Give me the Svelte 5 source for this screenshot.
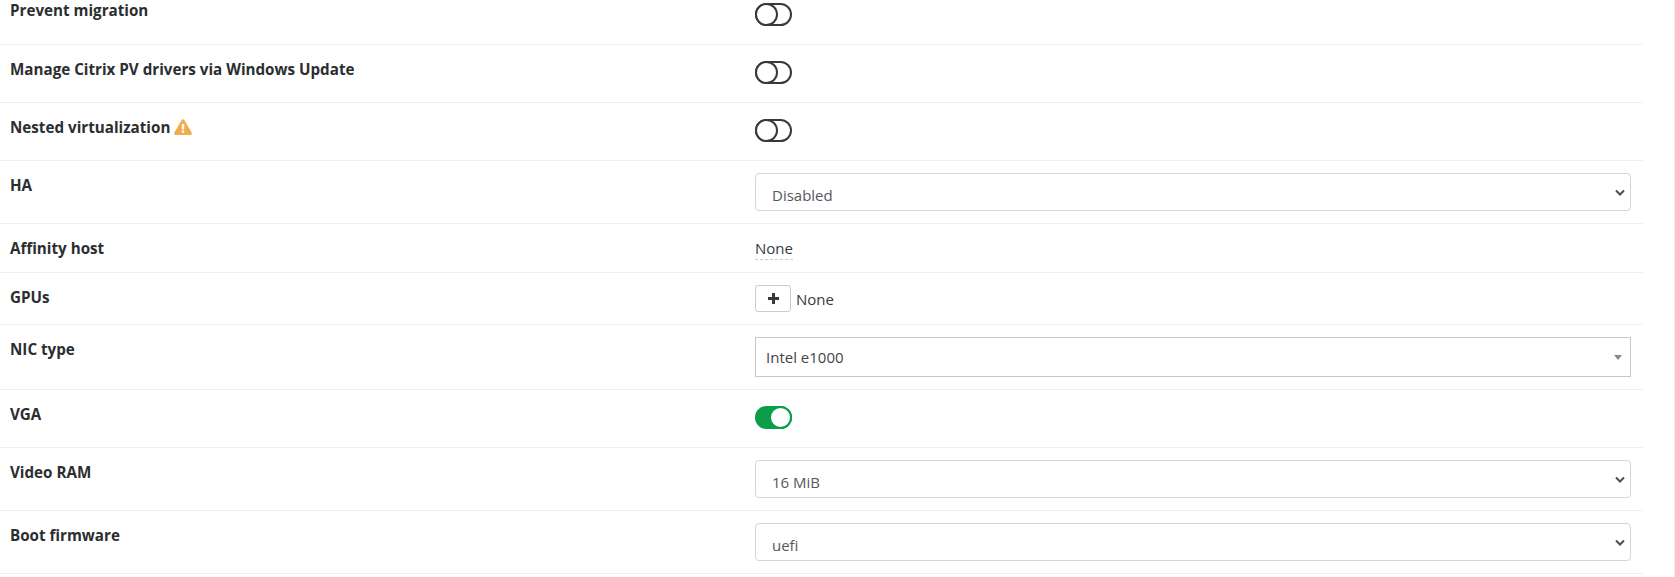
<script>
  const chevron =
    "url(\"data:image/svg+xml,%3Csvg xmlns='http://www.w3.org/2000/svg' viewBox='0 0 10 7'%3E%3Cpath d='M1 1.5l4 4 4-4' fill='none' stroke='%23495057' stroke-width='2'/%3E%3C/svg%3E\")";
</script>

<div class="page" style="--chevron: {chevron}">
  <div class="settings">
    <div class="row first">
      <div class="label">Prevent migration</div>
      <div class="value"><span class="toggle"></span></div>
    </div>
    <div class="row">
      <div class="label">Manage Citrix PV drivers via Windows Update</div>
      <div class="value"><span class="toggle"></span></div>
    </div>
    <div class="row">
      <div class="label">
        Nested virtualization
        <svg class="warn" viewBox="0 0 18 16">
          <path
            fill-rule="evenodd"
            d="M9 .2c.6 0 1.100.3 1.400.8l7.200 12.600c.6 1.100-.2 2.400-1.400 2.400H1.800c-1.200 0-2-1.300-1.400-2.400L7.600 1C7.900.5 8.400.2 9 .2zM7.700 5l.3 5.400h2L10.300 5zM7.800 11.500v2.200h2.400v-2.200z"
          />
        </svg>
      </div>
      <div class="value"><span class="toggle"></span></div>
    </div>
    <div class="row">
      <div class="label">HA</div>
      <div class="value">
        <select class="custom"><option>Disabled</option></select>
      </div>
    </div>
    <div class="row">
      <div class="label">Affinity host</div>
      <div class="value"><span class="editable">None</span></div>
    </div>
    <div class="row">
      <div class="label">GPUs</div>
      <div class="value gpus">
        <button class="add" aria-label="Add GPU">
          <svg viewBox="0 0 11 11"><path d="M4 0h3v4h4v3H7v4H4V7H0V4h4z" /></svg>
        </button>
        None
      </div>
    </div>
    <div class="row">
      <div class="label">NIC type</div>
      <div class="value">
        <div class="combo">Intel e1000<span class="caret"></span></div>
      </div>
    </div>
    <div class="row">
      <div class="label">VGA</div>
      <div class="value"><span class="toggle on"></span></div>
    </div>
    <div class="row">
      <div class="label">Video RAM</div>
      <div class="value">
        <select class="custom"><option>16 MiB</option></select>
      </div>
    </div>
    <div class="row">
      <div class="label">Boot firmware</div>
      <div class="value">
        <select class="custom"><option>uefi</option></select>
      </div>
    </div>
  </div>
</div>

<style>
  :global(body) {
    background: #fff;
    overflow: hidden;
  }
  .page {
    height: 577px;
    overflow: hidden;
    font-family: "Open Sans", "Liberation Sans", sans-serif;
    font-size: 15px;
    line-height: 24px;
    color: #373a3c;
    border-right: 1px solid #ececec;
  }
  .settings {
    width: 1643px;
  }
  .row {
    display: grid;
    grid-template-columns: 745px 1fr;
    padding: 12px 12px 12px 10px;
    border-bottom: 1px solid #eceeef;
  }
  .row.first {
    padding-top: 0;
    height: 32px;
  }
  .label {
    font-size: 15.2px;
    font-weight: 700;
    color: #2b2e30;
  }
  .first .label {
    margin-top: -2px;
  }
  .value {
    min-height: 24px;
  }
  .warn {
    width: 18px;
    height: 16px;
    fill: #f0ad4e;
    vertical-align: -2px;
  }
  .toggle {
    display: block;
    position: relative;
    box-sizing: border-box;
    width: 37px;
    height: 23px;
    margin: 4px 0 6px;
    border: 2px solid #373a3c;
    border-radius: 12px;
    background: #fff;
  }
  .first .toggle {
    margin-top: 3px;
  }
  .toggle::after {
    content: "";
    position: absolute;
    left: -2px;
    top: -2px;
    box-sizing: border-box;
    width: 23px;
    height: 23px;
    border: 2px solid #373a3c;
    border-radius: 50%;
    background: #fff;
  }
  .toggle.on {
    background: #0a9e4a;
    border-color: #0a9e4a;
  }
  .toggle.on::after {
    left: auto;
    right: -2px;
    border-color: #0a9e4a;
  }
  .custom {
    display: block;
    box-sizing: border-box;
    width: 100%;
    height: 38px;
    padding: 5px 30px 0 16px;
    border: 1px solid #d3d5d6;
    border-radius: 4px;
    font: inherit;
    color: #55595c;
    appearance: none;
    background: #fff var(--chevron) no-repeat right 5px center / 10px 7px;
  }
  .editable {
    display: block;
    width: fit-content;
    box-sizing: border-box;
    height: 24px;
    border-bottom: 1px dashed #ccc;
  }
  .gpus {
    display: flex;
    align-items: center;
    gap: 5px;
    height: 27px;
  }
  .add {
    display: flex;
    align-items: center;
    justify-content: center;
    box-sizing: border-box;
    width: 36px;
    height: 27px;
    padding: 0;
    border: 1px solid #ccc;
    border-radius: 3px;
    background: #fff;
  }
  .add svg {
    width: 11px;
    height: 11px;
    fill: #373a3c;
  }
  .combo {
    position: relative;
    box-sizing: border-box;
    height: 40px;
    padding: 7px 10px;
    border: 1px solid #c8c8c8;
    color: #444;
  }
  .caret {
    position: absolute;
    right: 8px;
    top: 17px;
    border-style: solid;
    border-width: 5px 4px 0;
    border-color: #888 transparent transparent;
  }
</style>
